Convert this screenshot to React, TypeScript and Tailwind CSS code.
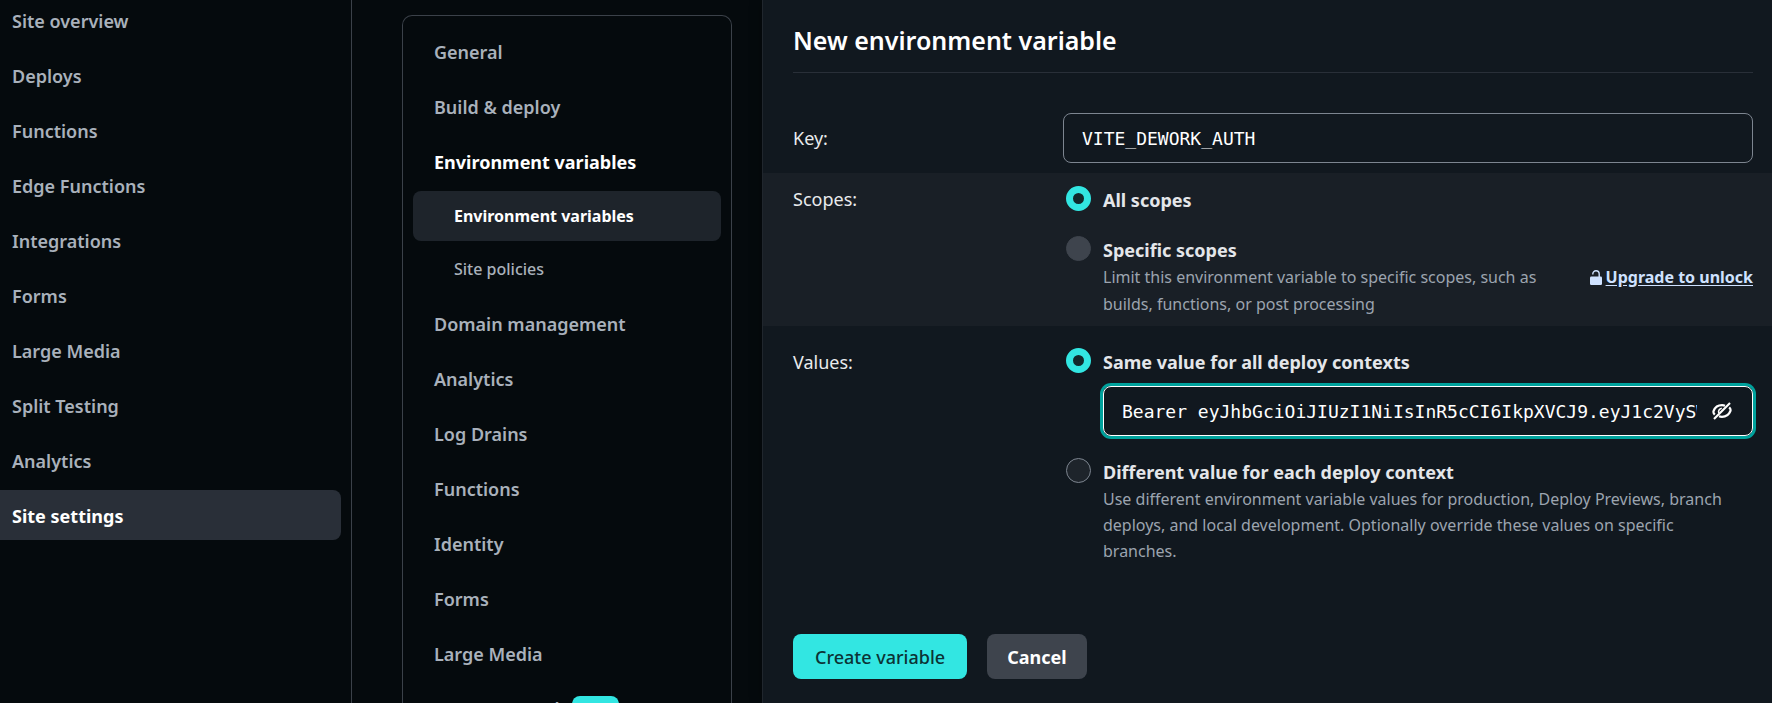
import React, { useState } from "react";

const siteLinks = [
  "Site overview",
  "Deploys",
  "Functions",
  "Edge Functions",
  "Integrations",
  "Forms",
  "Large Media",
  "Split Testing",
  "Analytics",
  "Site settings",
];

type SettingsLink = { label: string; children?: string[]; badge?: string };

const settingsLinks: SettingsLink[] = [
  { label: "General" },
  { label: "Build & deploy" },
  { label: "Environment variables", children: ["Environment variables", "Site policies"] },
  { label: "Domain management" },
  { label: "Analytics" },
  { label: "Log Drains" },
  { label: "Functions" },
  { label: "Identity" },
  { label: "Forms" },
  { label: "Large Media" },
  { label: "Access control", badge: "New" },
];

function SiteNav() {
  return (
    <nav aria-label="Site" className="w-[352px] shrink-0 border-r border-[#3b4149] pr-[10px]">
      <ul className="-mt-[5px] flex flex-col gap-[5px]">
        {siteLinks.map((label) => (
          <li key={label}>
            <a
              href="#"
              className={
                label === "Site settings"
                  ? "flex h-[50px] items-center rounded-r-lg bg-[#292f38] pt-[2px] pl-3 font-bold text-white"
                  : "flex h-[50px] items-center pt-[2px] pl-3 font-semibold text-[#a9b1bb]"
              }
            >
              {label}
            </a>
          </li>
        ))}
      </ul>
    </nav>
  );
}

function SettingsNav() {
  return (
    <nav
      aria-label="Settings"
      className="mt-[15px] mr-[30px] ml-[50px] w-[330px] shrink-0 rounded-t-[10px] border border-b-0 border-[#3b4149] px-[10px] pt-[11px]"
    >
      <ul className="flex flex-col gap-[5px]">
        {settingsLinks.map((link) => (
          <li key={link.label}>
            <a
              href="#"
              className={
                link.children
                  ? "flex h-[50px] items-center pl-[21px] font-bold text-white"
                  : "flex h-[50px] items-center gap-3 pl-[21px] font-semibold text-[#a9b1bb]"
              }
            >
              {link.label}
              {link.badge && (
                <span className="rounded-lg bg-[#32e6e2] px-[6px] text-base leading-[26px] text-[#0c2a2d]">
                  {link.badge}
                </span>
              )}
            </a>
            {link.children && (
              <ul className="mt-[4px] flex flex-col gap-[3px] text-base">
                {link.children.map((child, i) => (
                  <li key={child}>
                    <a
                      href="#"
                      className={
                        i === 0
                          ? "flex h-[50px] items-center rounded-lg bg-[#1e242b] pl-[41px] font-bold text-white"
                          : "flex h-[50px] items-center pl-[41px] font-medium text-[#a9b1bb]"
                      }
                    >
                      {child}
                    </a>
                  </li>
                ))}
              </ul>
            )}
          </li>
        ))}
      </ul>
    </nav>
  );
}

type RadioProps = {
  id: string;
  name: string;
  label: string;
  checked: boolean;
  disabled?: boolean;
  onSelect?: () => void;
  children?: React.ReactNode;
};

function RadioOption({ id, name, label, checked, disabled, onSelect, children }: RadioProps) {
  return (
    <div className="flex gap-3">
      <input
        id={id}
        type="radio"
        name={name}
        checked={checked}
        disabled={disabled}
        onChange={() => onSelect?.()}
        className="size-[25px] shrink-0 appearance-none rounded-full border border-[#7d8590] bg-[#1e242b] checked:border-[7px] checked:border-[#32e6e2] checked:bg-[#12282c] disabled:border-[#3e444d] disabled:bg-[#3e444d]"
      />
      <div className="min-w-0 flex-1">
        <label htmlFor={id} className="block leading-[28px] font-bold text-[#e4e6ea]">
          {label}
        </label>
        {children}
      </div>
    </div>
  );
}

function UnlockIcon() {
  return (
    <svg viewBox="0 0 12 15" className="h-[15px] w-3" aria-hidden="true">
      <path d="M2.800 4.600V4a3.200 3.200 0 0 1 6.400 0v3.500" fill="none" stroke="currentColor" strokeWidth="1.400" />
      <rect x="0" y="6.5" width="12" height="8.5" rx="1.2" fill="currentColor" />
    </svg>
  );
}

function HideIcon() {
  return (
    <svg
      viewBox="0 0 20 18"
      className="h-[18px] w-5"
      fill="none"
      stroke="currentColor"
      strokeWidth="2.2"
      aria-hidden="true"
    >
      <path d="M2.8 12.600C1.600 11.400 1.200 10 1.600 9 3 5.400 6.200 3.200 10 3.200c1 0 2 .1 3 .5" />
      <path d="M17.200 5.400c1.200 1.200 1.600 2.600 1.200 3.600-1.400 3.600-4.600 5.800-8.400 5.800-1 0-2-.1-3-.5" />
      <path d="M6.800 11C6 8.600 7.400 6.600 9.800 6.200" strokeWidth="1.600" />
      <path d="M2 17 18 1" />
    </svg>
  );
}

function VariableForm() {
  const [context, setContext] = useState("same");
  return (
    <main className="min-w-0 flex-1 border-l border-[#20262d] bg-[#11181f] shadow-[0_0_12px_rgba(0,0,0,0.3)]">
      <form onSubmit={(e) => e.preventDefault()}>
        <header className="mr-[19px] ml-[30px] border-b border-[#292f38] pt-5 pb-3">
          <h1 className="text-[25px] leading-[40px] font-semibold text-white">New environment variable</h1>
        </header>

        <div className="flex items-center pt-10 pr-[19px] pb-[10px] pl-[30px]">
          <label htmlFor="key" className="w-[270px] shrink-0 text-[#e9ebed]">
            Key:
          </label>
          <input
            id="key"
            type="text"
            defaultValue="VITE_DEWORK_AUTH"
            className="h-[50px] min-w-0 flex-1 rounded-lg border border-[#7d8590] bg-transparent px-[18px] font-['DejaVu_Sans_Mono',monospace] text-white outline-none"
          />
        </div>

        <div className="flex bg-[#191f26] pt-[13px] pr-[19px] pb-[8px] pl-[30px]">
          <span id="scopes" className="w-[273px] shrink-0 leading-[26px] text-[#e9ebed]">
            Scopes:
          </span>
          <div role="radiogroup" aria-labelledby="scopes" className="flex min-w-0 flex-1 flex-col gap-[22px]">
            <RadioOption id="all-scopes" name="scopes" label="All scopes" checked />
            <RadioOption id="specific-scopes" name="scopes" label="Specific scopes" checked={false} disabled>
              <div className="flex justify-between gap-10 text-base leading-[27px]">
                <p className="text-[#9ca4af]">
                  Limit this environment variable to specific scopes, such as builds, functions, or post processing
                </p>
                <a
                  href="#"
                  className="flex shrink-0 items-center gap-1 self-start font-bold text-[#cfe2ff]"
                >
                  <UnlockIcon />
                  <span className="underline underline-offset-2">Upgrade to unlock</span>
                </a>
              </div>
            </RadioOption>
          </div>
        </div>

        <div className="flex pt-[22px] pr-[19px] pl-[30px]">
          <span id="values" className="w-[273px] shrink-0 leading-[28px] text-[#e9ebed]">
            Values:
          </span>
          <div role="radiogroup" aria-labelledby="values" className="flex min-w-0 flex-1 flex-col gap-[22px]">
            <RadioOption
              id="same-value"
              name="values"
              label="Same value for all deploy contexts"
              checked={context === "same"}
              onSelect={() => setContext("same")}
            >
              <div className="mt-[10px] flex h-[50px] items-center rounded-lg border border-white pr-5 pl-[18px] ring-3 ring-[#00a19c]">
                <input
                  type="text"
                  aria-label="Value for all deploy contexts"
                  defaultValue="Bearer eyJhbGciOiJIUzI1NiIsInR5cCI6IkpXVCJ9.eyJ1c2VySWQi"
                  className="h-full min-w-0 flex-1 bg-transparent font-['DejaVu_Sans_Mono',monospace] text-white outline-none"
                />
                <button type="button" aria-label="Hide value" className="ml-[15px] text-white">
                  <HideIcon />
                </button>
              </div>
            </RadioOption>
            <RadioOption
              id="different-value"
              name="values"
              label="Different value for each deploy context"
              checked={context === "different"}
              onSelect={() => setContext("different")}
            >
              <p className="pr-4 text-base leading-[26px] text-[#9ca4af]">
                Use different environment variable values for production, Deploy Previews, branch deploys, and local
                development. Optionally override these values on specific branches.
              </p>
            </RadioOption>
          </div>
        </div>

        <div className="mt-[70px] flex gap-5 pl-[30px]">
          <button type="submit" className="h-[45px] rounded-lg bg-[#32e6e2] px-[22px] font-medium text-[#0c3335]">
            Create variable
          </button>
          <button type="button" className="h-[45px] rounded-lg bg-[#3e444d] px-5 font-bold text-white">
            Cancel
          </button>
        </div>
      </form>
    </main>
  );
}

export default function App() {
  return (
    <div className="flex h-screen overflow-hidden bg-[#050a0d] font-['Noto_Sans','Open_Sans',sans-serif] text-lg">
      <SiteNav />
      <SettingsNav />
      <VariableForm />
    </div>
  );
}
